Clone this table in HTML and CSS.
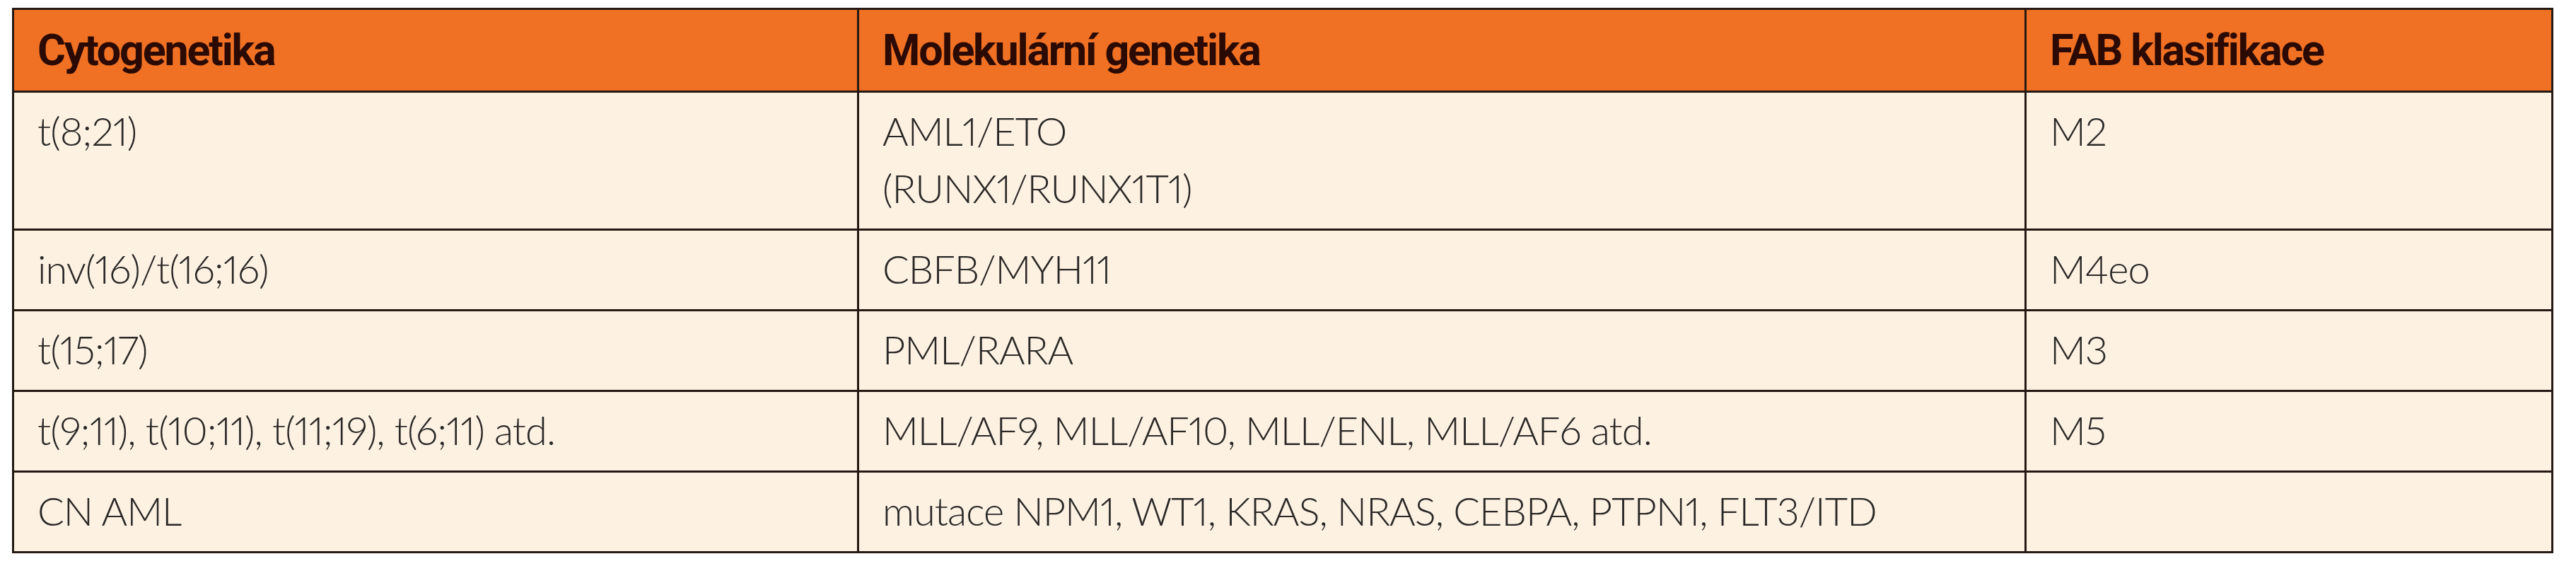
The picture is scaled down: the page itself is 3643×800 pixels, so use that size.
FILE: index.html
```html
<!DOCTYPE html>
<html lang="cs">
<head>
<meta charset="utf-8">
<title>Cytogenetika AML</title>
<link rel="stylesheet" href="styles.css">
</head>
<body>
<div class="wrap">
<table class="gen">
<colgroup>
<col class="c1"><col class="c2"><col class="c3">
</colgroup>
<thead>
<tr><th>Cytogenetika</th><th>Molekulární genetika</th><th>FAB klasifikace</th></tr>
</thead>
<tbody>
<tr><td>t(8;21)</td><td>AML1/ETO<br>(RUNX1/RUNX1T1)</td><td>M2</td></tr>
<tr><td>inv(16)/t(16;16)</td><td>CBFB/MYH11</td><td>M4eo</td></tr>
<tr><td>t(15;17)</td><td>PML/RARA</td><td>M3</td></tr>
<tr><td>t(9;11), t(10;11), t(11;19), t(6;11) atd.</td><td>MLL/AF9, MLL/AF10, MLL/ENL, MLL/AF6 atd.</td><td>M5</td></tr>
<tr><td>CN AML</td><td>mutace NPM1, WT1, KRAS, NRAS, CEBPA, PTPN1, FLT3/ITD</td><td></td></tr>
</tbody>
</table>
</div>
</body>
</html>
```

FILE: styles.css
```css
html, body {
  margin: 0;
  padding: 0;
  background: #ffffff;
}
.wrap {
  padding: 11px 36px 0 17px;
}
.gen {
  width: 3591px;
  border-collapse: collapse;
  table-layout: fixed;
  background: #fdf1e2;
  font-family: "Lato", "Open Sans", sans-serif;
  font-weight: 300;
  color: #2a2826;
}
.c1 { width: 1195px; }
.c2 { width: 1651px; }
.c3 { width: 745px; }
.gen th, .gen td {
  border: 3px solid #241a13;
  text-align: left;
  vertical-align: top;
}
.gen th {
  background: #f07024;
  color: #2a0a02;
  font-family: "Roboto", "Liberation Sans", sans-serif;
  font-weight: 700;
  font-size: 61px;
  letter-spacing: -2.2px;
  line-height: 80px;
  height: 80px;
  padding: 17px 33px 17px;
  vertical-align: middle;
}
.gen td {
  font-size: 56px;
  letter-spacing: -1px;
  font-variant-numeric: proportional-nums;
  line-height: 81px;
  padding: 13px 33px 17px;
}
```
